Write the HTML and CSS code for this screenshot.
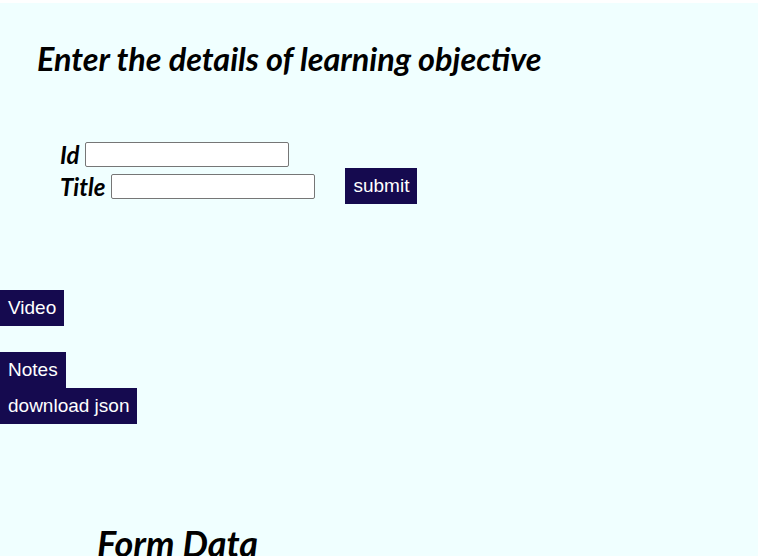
FILE: index.html
```html
<!DOCTYPE html>
<html>
<head>
<meta charset="utf-8">
<link rel="stylesheet" href="styles.css">
</head>
<body>
<div class="page">
  <h1 class="title">Enter the details of learning objective</h1>
  <form class="form">
    <div class="row">
      <label class="label" for="id">Id</label>
      <input class="field" id="id" type="text">
    </div>
    <div class="row">
      <label class="label" for="t">Title</label>
      <input class="field" id="t" type="text">
      <button class="btn submit" type="button">submit</button>
    </div>
  </form>
  <div class="actions">
    <button class="btn" type="button">Video</button>
    <div class="stack">
      <button class="btn" type="button">Notes</button>
      <button class="btn" type="button">download json</button>
    </div>
  </div>
  <h2 class="sub">Form Data</h2>
</div>
</body>
</html>
```
FILE: styles.css
```css
html, body {
  margin: 0;
  background: #ffffff;
}
.page {
  margin-top: 3px;
  background: #f0ffff;
  height: 553px;
  overflow: hidden;
  display: flex;
  flex-direction: column;
}
.title {
  margin: 38px 0 0 37px;
  font-family: Lato, "Open Sans", sans-serif;
  font-weight: 700;
  font-style: italic;
  font-size: 32.4px;
  line-height: 36px;
  color: #000;
}
.form {
  margin: 65px 0 0 60px;
  display: flex;
  flex-direction: column;
  gap: 7px;
}
.row {
  display: flex;
  align-items: center;
  gap: 6px;
  height: 25px;
}
.label {
  font-family: Lato, "Open Sans", sans-serif;
  font-weight: 700;
  font-style: italic;
  font-size: 24px;
  line-height: 25px;
  color: #000;
}
.field {
  box-sizing: border-box;
  width: 204px;
  height: 25px;
  margin: 0;
  border: 1px solid #767676;
  border-radius: 2px;
  background: #fff;
  padding: 0 4px;
}
.btn {
  display: block;
  margin: 0;
  border: 0;
  padding: 7px 8px;
  background: #150a4f;
  color: #ffffff;
  font-family: "Liberation Sans", Arial, sans-serif;
  font-size: 19px;
  line-height: 22px;
  width: fit-content;
  cursor: pointer;
  flex-shrink: 0;
}
.submit {
  margin: -6px 0 -5px 24px;
}
.actions {
  margin-top: 91px;
  display: flex;
  flex-direction: column;
  gap: 26px;
}
.stack {
  display: flex;
  flex-direction: column;
}
.sub {
  margin: 99px 0 0 97px;
  font-family: Lato, "Open Sans", sans-serif;
  font-weight: 700;
  font-style: italic;
  font-size: 36px;
  line-height: 40px;
  color: #000;
  white-space: nowrap;
}
```
